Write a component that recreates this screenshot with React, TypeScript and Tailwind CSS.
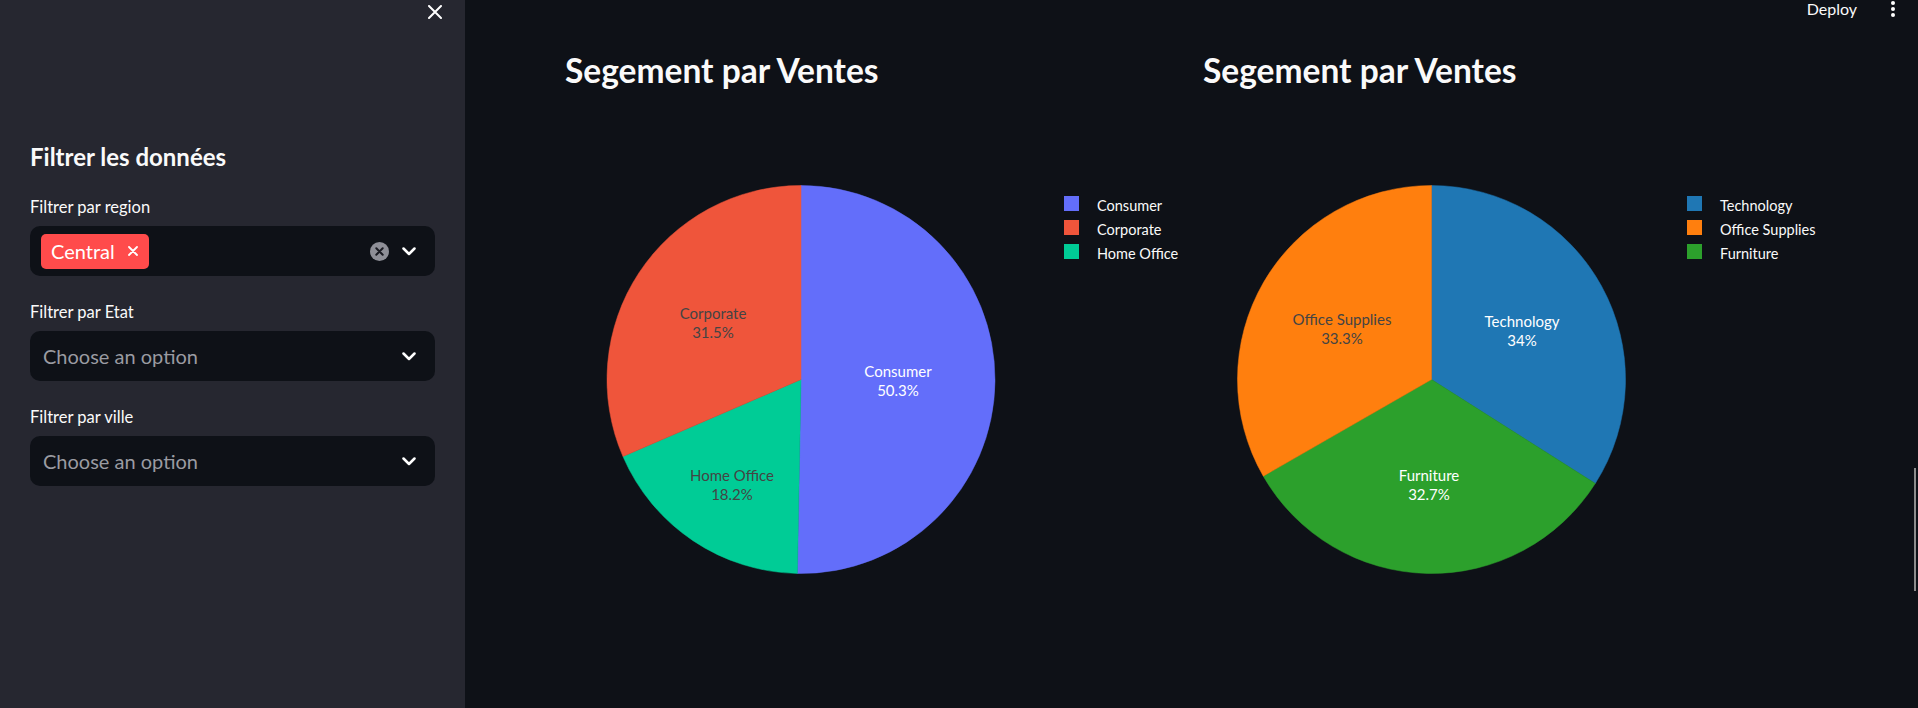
import React from 'react';

interface Slice {
  label: string;
  pct: number; // share, 0 to 1
  color: string;
  text: string;
  tx: number;
  ty: number;
  dark?: boolean;
}

interface PieSpec {
  cx: number;
  cy: number;
  r: number;
  legendX: number;
  slices: Slice[];
  legend: { label: string; color: string }[];
}

const segments: PieSpec = {
  cx: 236,
  cy: 279.5,
  r: 194,
  legendX: 499,
  slices: [
    { label: 'Consumer', pct: 0.503, color: '#636efa', text: '50.3%', tx: 333, ty: 277 },
    { label: 'Home Office', pct: 0.182, color: '#00cc96', text: '18.2%', tx: 167, ty: 381, dark: true },
    { label: 'Corporate', pct: 0.315, color: '#ef553b', text: '31.5%', tx: 148, ty: 219, dark: true },
  ],
  legend: [
    { label: 'Consumer', color: '#636efa' },
    { label: 'Corporate', color: '#ef553b' },
    { label: 'Home Office', color: '#00cc96' },
  ],
};

const categories: PieSpec = {
  cx: 228.5,
  cy: 279.5,
  r: 194,
  legendX: 484,
  slices: [
    { label: 'Technology', pct: 0.34, color: '#1f77b4', text: '34%', tx: 319, ty: 227 },
    { label: 'Furniture', pct: 0.327, color: '#2ca02c', text: '32.7%', tx: 226, ty: 381 },
    { label: 'Office Supplies', pct: 0.333, color: '#ff7f0e', text: '33.3%', tx: 139, ty: 225, dark: true },
  ],
  legend: [
    { label: 'Technology', color: '#1f77b4' },
    { label: 'Office Supplies', color: '#ff7f0e' },
    { label: 'Furniture', color: '#2ca02c' },
  ],
};

// clockwise from 12 o'clock, fractions of a turn
const arcPath = (cx: number, cy: number, r: number, a0: number, a1: number) => {
  const p = (a: number) => {
    const t = a * Math.PI * 2;
    return [cx + r * Math.sin(t), cy - r * Math.cos(t)];
  };
  const [x0, y0] = p(a0);
  const [x1, y1] = p(a1);
  const large = a1 - a0 > 0.5 ? 1 : 0;
  return `M${cx},${cy} L${x0},${y0} A${r},${r} 0 ${large} 1 ${x1},${y1} Z`;
};

const PieChart: React.FC<{ spec: PieSpec }> = ({ spec }) => {
  let acc = 0;
  return (
    <svg width={622} height={560} className="block">
      {spec.slices.map((s) => {
        const d = arcPath(spec.cx, spec.cy, spec.r, acc, acc + s.pct);
        acc += s.pct;
        return <path key={s.label} d={d} fill={s.color} stroke={s.color} strokeWidth={0.5} />;
      })}
      {spec.slices.map((s) => (
        <g key={`t-${s.label}`} fill={s.dark ? '#444444' : '#ffffff'} fontFamily="Lato, sans-serif" fontSize="15" textAnchor="middle">
          <text x={s.tx} y={s.ty}>{s.label}</text>
          <text x={s.tx} y={s.ty + 19}>{s.text}</text>
        </g>
      ))}
      {spec.legend.map((l, i) => (
        <g key={`l-${l.label}`}>
          <rect x={spec.legendX} y={96 + i * 24} width={15} height={15} fill={l.color} />
          <text x={spec.legendX + 33} y={111 + i * 24} fill="#fafafa" fontFamily="Lato, sans-serif" fontSize="14.5">
            {l.label}
          </text>
        </g>
      ))}
    </svg>
  );
};

const Chevron = () => (
  <svg width="14" height="9" viewBox="0 0 14 9" fill="none">
    <polyline points="1.5,1.5 7,7 12.5,1.5" stroke="#ffffff" strokeWidth="2.5" strokeLinecap="round" strokeLinejoin="round" />
  </svg>
);

const SelectBox: React.FC<{ label: string; children?: React.ReactNode; clearable?: boolean }> = ({ label, children, clearable }) => (
  <div className="mt-[26px] first:mt-0">
    <div className="text-[16.5px] leading-[20px] text-[#fafafa]">{label}</div>
    <div className="mt-[9px] h-[50px] rounded-[10px] bg-[#0e1117] flex items-center pl-[11px] pr-[19px]">
      <div className="flex-1 flex items-center">{children}</div>
      {clearable && (
        <svg width="19" height="19" viewBox="0 0 19 19" className="mr-[13px]">
          <circle cx="9.5" cy="9.5" r="9.5" fill="#8e8f97" />
          <path d="M6.3 6.3 L12.7 12.7 M12.7 6.3 L6.3 12.7" stroke="#1a1b22" strokeWidth="2" strokeLinecap="round" />
        </svg>
      )}
      <Chevron />
    </div>
  </div>
);

export default function App() {
  return (
    <div className="flex w-[1918px] h-[708px] overflow-hidden font-['Lato',sans-serif] text-[#fafafa]">
      {/* Sidebar */}
      <aside className="relative w-[465px] shrink-0 h-full bg-[#262730] px-[30px]">
        <button className="absolute top-[5px] right-[23px] w-[14px] h-[14px]">
          <svg width="14" height="14" viewBox="0 0 14 14">
            <path d="M1 1 L13 13 M13 1 L1 13" stroke="#ffffff" strokeWidth="2" strokeLinecap="round" />
          </svg>
        </button>
        <div className="pt-[141px]">
          <h2 className="text-[24px] leading-[32px] font-bold">Filtrer les données</h2>
          <div className="mt-[24px]">
            <SelectBox label="Filtrer par region" clearable>
              <span className="h-[35px] rounded-[5px] bg-[#ff4b4b] flex items-center pl-[10px] pr-[11px] text-[20px] text-white">
                Central
                <svg width="10" height="10" viewBox="0 0 10 10" className="ml-[13px]">
                  <path d="M1 1 L9 9 M9 1 L1 9" stroke="#ffffff" strokeWidth="1.8" strokeLinecap="round" />
                </svg>
              </span>
            </SelectBox>
            <SelectBox label="Filtrer par Etat">
              <span className="pl-[2px] text-[20px] text-[#9a9ba2]">Choose an option</span>
            </SelectBox>
            <SelectBox label="Filtrer par ville">
              <span className="pl-[2px] text-[20px] text-[#9a9ba2]">Choose an option</span>
            </SelectBox>
          </div>
        </div>
      </aside>

      {/* Main */}
      <main className="relative flex-1 h-full bg-[#0e1117]">
        <div className="absolute top-0 right-[61px] text-[16px] leading-[18px]">Deploy</div>
        <div className="absolute top-[1px] right-[23px] flex flex-col gap-[2px]">
          <span className="w-[4px] h-[4px] rounded-full bg-white" />
          <span className="w-[4px] h-[4px] rounded-full bg-white" />
          <span className="w-[4px] h-[4px] rounded-full bg-white" />
        </div>
        <div className="absolute right-[2px] top-[468px] w-[2px] h-[123px] bg-[#8c8c8c]" />

        <div className="flex gap-[16px] pl-[100px] pt-[40px]">
          <section className="w-[622px]">
            <h1 className="text-[33.5px] leading-[60px] font-bold">Segement par Ventes</h1>
            <PieChart spec={segments} />
          </section>
          <section className="w-[622px]">
            <h1 className="text-[33.5px] leading-[60px] font-bold">Segement par Ventes</h1>
            <PieChart spec={categories} />
          </section>
        </div>
      </main>
    </div>
  );
}
